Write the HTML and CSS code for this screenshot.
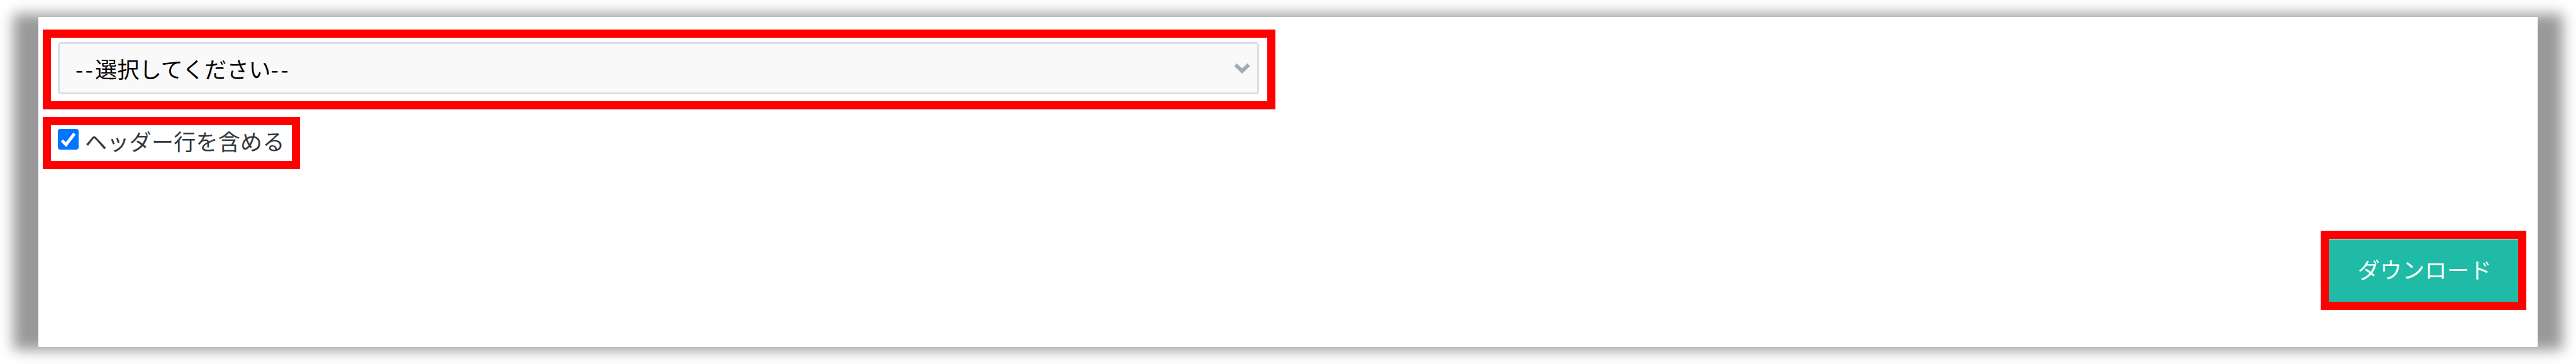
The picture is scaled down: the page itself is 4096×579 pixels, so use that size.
FILE: index.html
```
<!DOCTYPE html>
<html lang="ja">
<head>
<meta charset="utf-8">
<title>ダウンロード</title>
<link rel="stylesheet" href="styles.css">
</head>

<body>
<form class="panel">
  <div class="mark mark-select">
    <div class="select">
      <span class="select-text"><span class="dash">--</span>選択してください<span class="dash">--</span></span>
      <svg class="chevron" viewBox="0 0 26 17"><path d="M2.5 3 L13 13 L23.5 3"/></svg>
    </div>
  </div>

  <div class="mark mark-check">
    <label class="check">
      <svg class="checkbox" viewBox="0 0 33 33">
        <rect width="33" height="33" rx="4"/>
        <path d="M6.5 18.5 L13 25 L26.5 7.5"/>
      </svg>
      <span class="check-text">ヘッダー行を含める</span>
    </label>
  </div>

  <div class="mark mark-button">
    <button type="button" class="button">ダウンロード</button>
  </div>
</form>
</body>
</html>
```

FILE: styles.css
```
* {
  box-sizing: border-box;
}

body {
  margin: 0;
  height: 579px;
  padding: 27px 61px;
  background: #fff;
  font-family: "Noto Sans CJK JP", sans-serif;
  font-size: 35px;
  overflow: hidden;
}

.panel {
  display: flex;
  flex-direction: column;
  align-items: flex-start;
  width: 3974px;
  height: 525px;
  padding: 20px 18px 0 7px;
  background: #fff;
  position: relative;
}

/* soft grey edge, wider at the sides than at the top */
.panel::before {
  content: "";
  position: absolute;
  z-index: -1;
  top: -5px;
  bottom: -5px;
  left: -40px;
  right: -40px;
  background: #999;
  filter: blur(10.5px);
}

.mark {
  border: 13px solid #f00;
}

.mark-select {
  width: 1960px;
  height: 127px;
  padding: 7px 13px 0 11px;
}

.select {
  display: flex;
  align-items: center;
  justify-content: space-between;
  height: 83px;
  padding: 0 11px 0 25px;
  border: 3px solid #d9dfe3;
  border-radius: 5px;
  background: #f9f9f9;
  color: #000;
}

.select-text {
  letter-spacing: 0.2px;
  white-space: nowrap;
}

.dash {
  letter-spacing: 3.5px;
}

.chevron {
  width: 26px;
  height: 17px;
  fill: none;
  stroke: #9faeb6;
  stroke-width: 6;
}

.mark-check {
  width: 409px;
  height: 83px;
  margin-top: 12px;
  padding: 6px 0 0 11px;
}

.check {
  display: flex;
  align-items: flex-start;
  color: #32383e;
  white-space: nowrap;
}

.checkbox {
  width: 33px;
  height: 33px;
  margin-right: 10px;
}

.checkbox rect {
  fill: #0075ff;
}

.checkbox path {
  fill: none;
  stroke: #fff;
  stroke-width: 5;
}

.check-text {
  letter-spacing: 0.3px;
  line-height: 38px;
}

.mark-button {
  align-self: flex-end;
  width: 327px;
  height: 126px;
  margin-top: 98px;
}

.button {
  display: block;
  width: 100%;
  height: 100%;
  padding: 0 0 7px 4px;
  border: 0;
  border-top: 1px solid #a9ded6;
  background: #20bba7;
  color: #fff;
  font: inherit;
  letter-spacing: 0.6px;
  white-space: nowrap;
}
```
